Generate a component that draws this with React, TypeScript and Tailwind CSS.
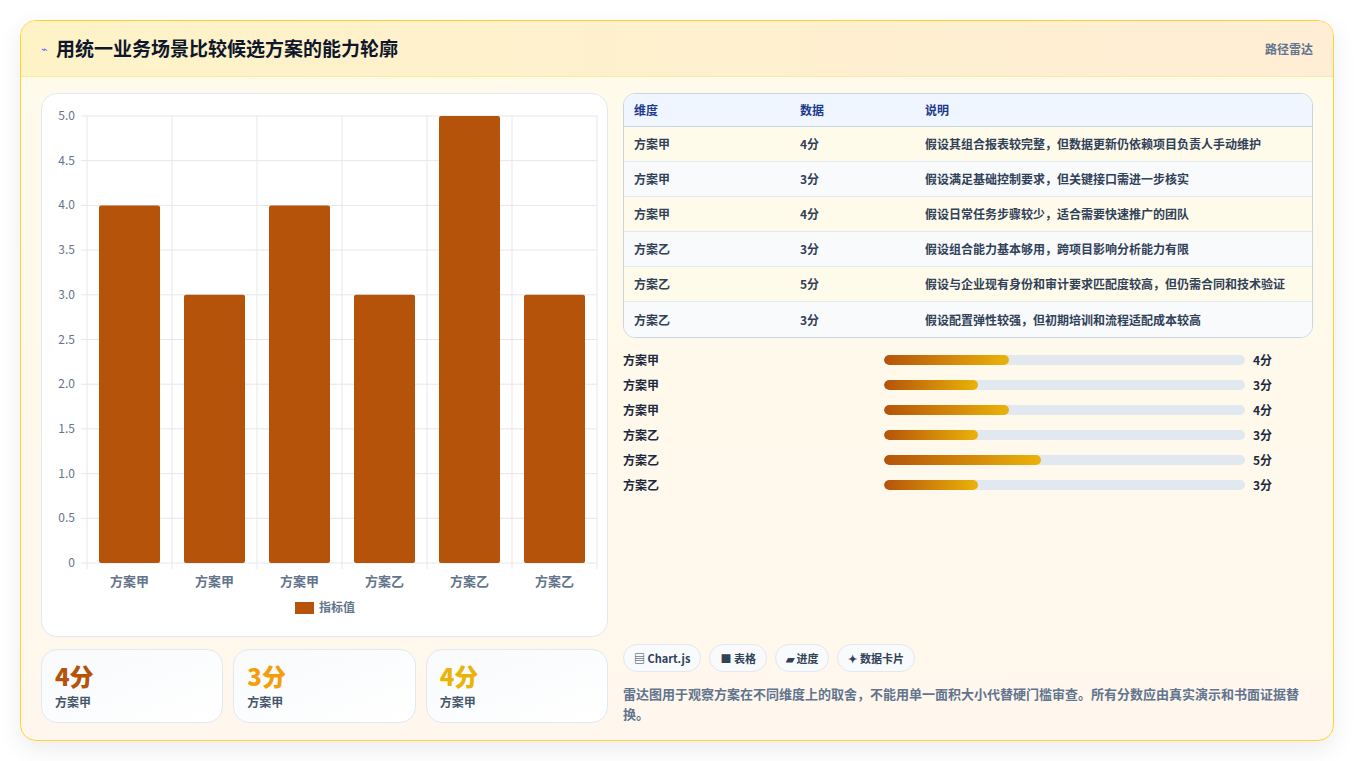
import React from "react";

const rows = [
  ["方案甲", "4分", "假设其组合报表较完整，但数据更新仍依赖项目负责人手动维护", 4],
  ["方案甲", "3分", "假设满足基础控制要求，但关键接口需进一步核实", 3],
  ["方案甲", "4分", "假设日常任务步骤较少，适合需要快速推广的团队", 4],
  ["方案乙", "3分", "假设组合能力基本够用，跨项目影响分析能力有限", 3],
  ["方案乙", "5分", "假设与企业现有身份和审计要求匹配度较高，但仍需合同和技术验证", 5],
  ["方案乙", "3分", "假设配置弹性较强，但初期培训和流程适配成本较高", 3],
] as const;

const barW: Record<number, number> = { 3: 94, 4: 125, 5: 157 };

function Chart() {
  const L = 45, R = 555, T = 22, B = 469;
  const unit = (B - T) / 5;
  const cw = (R - L) / 6;
  const ticks = [0, 0.5, 1, 1.5, 2, 2.5, 3, 3.5, 4, 4.5, 5];
  return (
    <svg width="566" height="541" className="block">
      {ticks.map((t) => (
        <g key={t}>
          <line x1={L - 6} x2={R} y1={B - t * unit} y2={B - t * unit} stroke="#e5e7eb" />
          <text x={L - 12} y={B - t * unit + 4} textAnchor="end" fontSize="12" fill="#64748b">
            {t === 0 ? "0" : t.toFixed(1)}
          </text>
        </g>
      ))}
      {Array.from({ length: 7 }).map((_, i) => (
        <line key={i} x1={L + i * cw} x2={L + i * cw} y1={T} y2={B + 6} stroke="#e5e7eb" />
      ))}
      {rows.map((r, i) => (
        <g key={i}>
          <rect x={L + i * cw + 12} y={B - (r[3] as number) * unit} width={61} height={(r[3] as number) * unit} rx="2" fill="#b45309" />
          <text x={L + i * cw + cw / 2} y={492} textAnchor="middle" fontSize="13" fontWeight="600" fill="#64748b">{r[0]}</text>
        </g>
      ))}
      <rect x="253" y="508" width="19" height="12" fill="#b45309" />
      <text x="277" y="518" fontSize="12" fontWeight="600" fill="#64748b">指标值</text>
    </svg>
  );
}

export default function App() {
  return (
    <div className="w-[1354px] h-[761px] bg-white p-5 text-slate-700" style={{ fontFamily: '"Noto Sans CJK SC", "Noto Sans", sans-serif' }}>
      <div className="h-[721px] rounded-2xl border border-amber-300 bg-gradient-to-b from-[#fffbeb] to-[#fff7ed] shadow-[0_8px_24px_rgba(0,0,0,0.08)] overflow-hidden flex flex-col">
        <div className="h-14 flex items-center justify-between px-5 bg-gradient-to-r from-[#fef3c7] to-[#ffedd5] border-b border-amber-200/70">
          <div className="flex items-center gap-2">
            <span className="text-[11px] text-indigo-500">⌁</span>
            <span className="text-[19px] font-bold text-slate-900">用统一业务场景比较候选方案的能力轮廓</span>
          </div>
          <span className="text-xs font-semibold text-slate-500">路径雷达</span>
        </div>
        <div className="flex gap-[15px] px-5 pt-4">
          <div className="w-[567px] flex flex-col gap-3">
            <div className="h-[544px] rounded-2xl border border-slate-200 bg-white overflow-hidden">
              <Chart />
            </div>
            <div className="grid grid-cols-3 gap-[10px]">
              {[["4分", "text-[#b45309]"], ["3分", "text-[#f59e0b]"], ["4分", "text-[#eab308]"]].map(([v, c], i) => (
                <div key={i} className="h-[74px] rounded-2xl border border-slate-200 bg-gradient-to-br from-[#f8fafc] to-white px-[13px] pt-3">
                  <div className={`text-[24px] leading-7 font-extrabold ${c}`}>{v}</div>
                  <div className="text-xs font-semibold text-slate-600 mt-1">方案甲</div>
                </div>
              ))}
            </div>
          </div>
          <div className="flex-1 flex flex-col">
            <div className="rounded-xl border border-slate-300 overflow-hidden text-xs">
              <div className="flex h-[33px] items-center bg-[#eff6ff] text-[#1e3a8a] font-semibold border-b border-slate-300 px-[10px]">
                <div className="w-[166px]">维度</div>
                <div className="w-[125px]">数据</div>
                <div>说明</div>
              </div>
              {rows.map((r, i) => (
                <div key={i} className={`flex h-[35px] items-center px-[10px] font-semibold text-slate-700 ${i < 5 ? "border-b border-slate-200" : ""} ${i % 2 === 0 ? "bg-[#fffbeb]" : "bg-[#f8fafc]"}`}>
                  <div className="w-[166px]">{r[0]}</div>
                  <div className="w-[125px]">{r[1]}</div>
                  <div>{r[2]}</div>
                </div>
              ))}
            </div>
            <div className="mt-[9px] flex flex-col">
              {rows.map((r, i) => (
                <div key={i} className="h-[25px] flex items-center text-xs font-semibold text-slate-800">
                  <div className="w-[261px]">{r[0]}</div>
                  <div className="w-[361px] h-[10px] rounded-full bg-slate-200 overflow-hidden">
                    <div className="h-full rounded-full bg-gradient-to-r from-[#b45309] to-[#eab308]" style={{ width: barW[r[3] as number] }} />
                  </div>
                  <div className="ml-2">{r[1]}</div>
                </div>
              ))}
            </div>
            <div className="mt-[147px] flex gap-2">
              {["▤ Chart.js", "■ 表格", "▰ 进度", "✦ 数据卡片"].map((t) => (
                <span key={t} className="h-7 px-[10px] flex items-center rounded-full border border-slate-200 bg-[#f8fafc] text-[11px] font-semibold text-slate-700">{t}</span>
              ))}
            </div>
            <p className="mt-[12px] text-[13px] leading-5 font-semibold text-slate-500">雷达图用于观察方案在不同维度上的取舍，不能用单一面积大小代替硬门槛审查。所有分数应由真实演示和书面证据替换。</p>
          </div>
        </div>
      </div>
    </div>
  );
}
